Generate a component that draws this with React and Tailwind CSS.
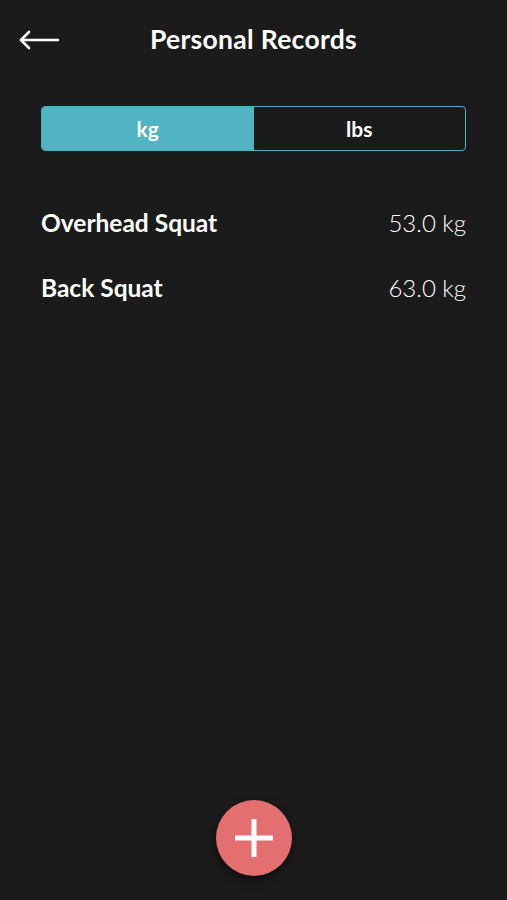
import React from "react";

export default function App() {
  return (
    <div
      className="w-[507px] h-[900px] bg-[#1b1b1b] text-white flex flex-col relative overflow-hidden"
      style={{ fontFamily: "Lato, 'Noto Sans', sans-serif" }}
    >
      <header className="h-[80px] flex items-center relative px-[18px]">
        <svg width="42" height="20" viewBox="0 0 42 20" fill="none" stroke="white" strokeWidth="2.6" strokeLinecap="round" strokeLinejoin="round">
          <path d="M40 10H3" />
          <path d="M11 2L3 10L11 18" />
        </svg>
        <h1 className="absolute left-0 right-0 text-center text-[26.5px] font-bold tracking-[0.3px] pointer-events-none">
          Personal Records
        </h1>
      </header>

      <div className="mx-[41px] mt-[26px] h-[45px] flex rounded-[4px] border border-[#4fb0be] overflow-hidden">
        <div className="flex-1 bg-[#52b3c2] flex items-center justify-center text-[21px] font-bold">kg</div>
        <div className="flex-1 flex items-center justify-center text-[21px] font-bold">lbs</div>
      </div>

      <div className="mx-[41px] mt-[58px] flex flex-col gap-[37px]">
        <div className="flex justify-between items-center h-[28px]">
          <span className="text-[24.5px] font-bold">Overhead Squat</span>
          <span className="text-[24px] font-light text-white">53.0 kg</span>
        </div>
        <div className="flex justify-between items-center h-[28px]">
          <span className="text-[24.5px] font-bold">Back Squat</span>
          <span className="text-[24px] font-light text-white">63.0 kg</span>
        </div>
      </div>

      <button className="absolute left-[216px] top-[800px] w-[76px] h-[76px] rounded-full bg-[#e36f71] flex items-center justify-center shadow-[0_4px_10px_rgba(0,0,0,0.5)]">
        <svg width="40" height="40" viewBox="0 0 40 40" fill="none" stroke="white" strokeWidth="5">
          <path d="M20 1V39" />
          <path d="M1 20H39" />
        </svg>
      </button>
    </div>
  );
}
